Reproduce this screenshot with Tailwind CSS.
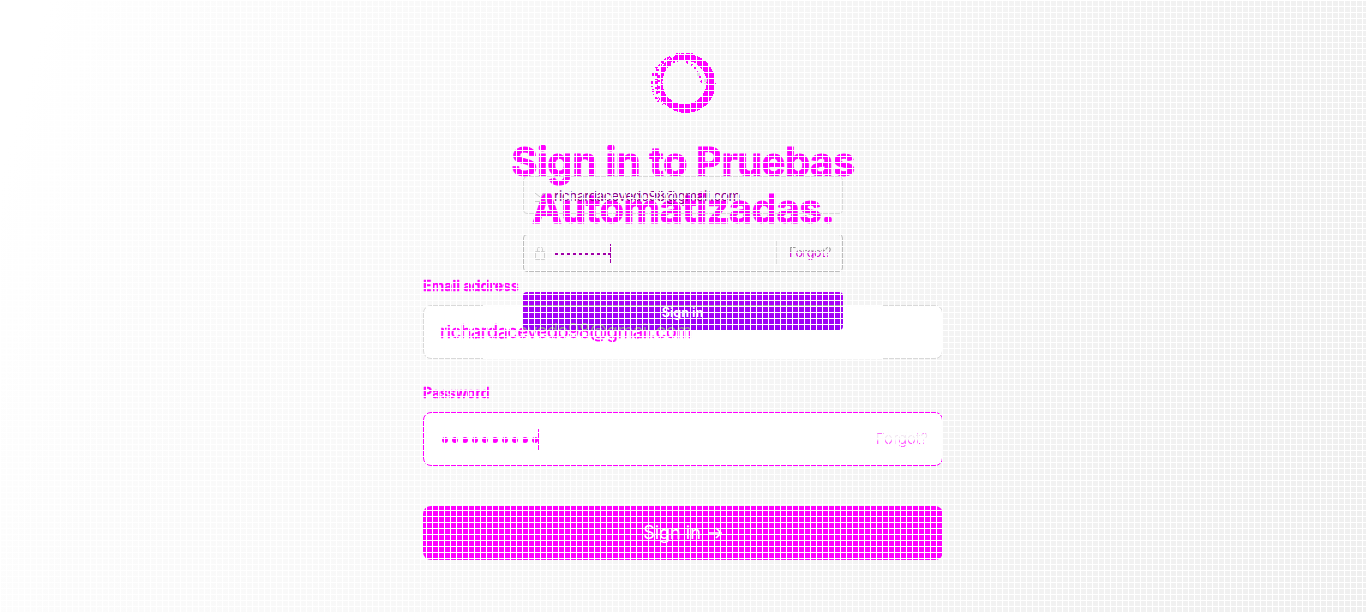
<!DOCTYPE html>
<html lang="en"><head><meta charset="utf-8"><title>Sign in</title>
<script src="https://cdn.jsdelivr.net/npm/@tailwindcss/browser@4"></script></head>
<body class="relative h-[612px] w-[1366px] overflow-hidden bg-[linear-gradient(105deg,#ffffff_3%,#fbfbfb_15%,#f8f8f8_35%,#f4f4f4_62%,#efefef_100%)] font-['Inter',sans-serif] text-[#ff00ff]">
<main class="mx-auto flex w-[520px] flex-col pt-[52px]">
  <svg class="ml-[227px] h-[62px] w-[68px]" viewBox="650 52 68 62" fill="none" stroke="#ff00ff" shape-rendering="crispEdges">
    <path fill="#ff00ff" stroke="none" fill-rule="evenodd" d="M686 54a29.500 29.500 0 1 0 .1 0ZM684.500 60.500a22 22 0 1 1-.1 0Z" />
    <path d="M678 54Q652 62 652 82Q652 94 659 102" stroke-width="2" stroke-dasharray="3 2 1 2"/>
    <path d="M668 58Q655 67 656 82Q656 94 664 104" stroke-width="3" stroke-dasharray="4 2 2 1"/>
    <path d="M676 54Q686 52 693 54" stroke-width="1" stroke-dasharray="4 1"/>
    <path d="M659 67V98" stroke="#fafafa" stroke-width="2" stroke-dasharray="2 2 4 3"/>
    <path d="M671 64Q690 57 705 80" stroke="#fafafa" stroke-width="3" stroke-dasharray="2 2"/>
    <path d="M686 62Q698 66 702 84" stroke-dasharray="2 3" stroke-width="2"/>
    <path d="M696 74h4M705 78v7" stroke="#dddddd" stroke-width="3" stroke-dasharray="4 1"/>
  </svg>
  <h1 class="mt-[24px] h-[96px] text-center text-[40px] leading-[47px] font-bold tracking-[-0.5px] [-webkit-text-stroke:0.8px_#ff00ff]">Sign in to Pruebas<br>Automatizadas.</h1>
  <label class="mt-[41px] flex h-5 items-center text-[14px] font-semibold tracking-[0.1px] [-webkit-text-stroke:0.4px_#ff00ff]"><span>Email address</span></label>
  <div class="relative mt-[10px] flex h-[54px] items-center rounded-lg border border-[#d9d9d9] bg-white px-4 pb-[2px] text-[18px] tracking-[-0.32px]">
    <span class="[-webkit-text-stroke:0.3px_#ff00ff]">richardacevedo98@gmail.com</span>
    <span class="absolute -top-px left-[59px] h-px w-[400px] bg-white"></span><span class="absolute -bottom-px left-[59px] h-px w-[400px] bg-white"></span>
  </div>
  <label class="mt-[23px] flex h-5 items-center text-[14px] font-semibold [-webkit-text-stroke:0.4px_#ff00ff]"><span>Password</span></label>
  <div class="mt-[10px] flex h-[54px] items-center justify-between rounded-lg border border-[#ff00ff] bg-white pr-[14px] pl-[18px] text-[15px]">
    <span class="flex items-center gap-[4px]"><i class="mt-px size-[6px] rounded-full bg-[#ff00ff]"></i><i class="mt-px size-[6px] rounded-full bg-[#ff00ff]"></i><i class="mt-px size-[6px] rounded-full bg-[#ff00ff]"></i><i class="mt-px size-[6px] rounded-full bg-[#ff00ff]"></i><i class="mt-px size-[6px] rounded-full bg-[#ff00ff]"></i><i class="mt-px size-[6px] rounded-full bg-[#ff00ff]"></i><i class="mt-px size-[6px] rounded-full bg-[#ff00ff]"></i><i class="mt-px size-[6px] rounded-full bg-[#ff00ff]"></i><i class="mt-px size-[6px] rounded-full bg-[#ff00ff]"></i><i class="mt-px size-[6px] rounded-full bg-[#ff00ff]"></i><i class="-ml-[4px] h-[21px] w-px bg-[#ff00ff]"></i></span>
    <span class="bg-[linear-gradient(#f0e4f0_0_3px,#ff00ff_3px_5px,#f0e4f0_6px_12px,#ff44ff_13px)] bg-clip-text font-light text-transparent">Forgot?</span>
  </div>
  <button class="mt-[40px] flex h-[54px] items-center justify-center gap-[7px] rounded-lg bg-[#ff00ff] pr-px pb-[2px] text-[18px] text-white">Sign in
    <svg class="mt-px h-3 w-[14px]" viewBox="0 0 14 12" fill="none" stroke="white" stroke-width="1.700"><path d="M0 6h13M8 1l5 5-5 5"/></svg></button>
</main>

<!-- compact form lying over the full-size one -->
<section class="absolute top-[176px] left-[523px] flex w-[320px] flex-col">
  <div class="flex h-[38px] items-center rounded border border-[#d9d9d9] pt-[3px] pr-3 pl-[10px] text-[13.500px] tracking-[-0.34px] text-[#8b008b]">
    <svg class="mr-[8px] h-[10px] w-3" viewBox="0 0 12 10" fill="none" stroke="#c8c8c8"><path d="M.5.5h11v9H.5zM1 1l5 4 5-4"/></svg><span>richardacevedo98@gmail.com</span>
  </div>
  <div class="mt-[20px] flex h-[38px] items-center rounded border border-[#bdbdbd] pr-[11px] pl-[11px] text-[12.500px]">
    <svg class="mr-[10px] h-[14px] w-[10px]" viewBox="0 0 10 14" fill="none" stroke="#cfcfcf"><path d="M.5 5.500h9v8h-9zM2.500 5V2.500Q2.500 1 5 1t2.500 1.500V5"/></svg>
    <span class="flex items-center gap-[3px]"><i class="mt-px size-[3px] bg-[#a000a8]"></i><i class="mt-px size-[3px] bg-[#a000a8]"></i><i class="mt-px size-[3px] bg-[#a000a8]"></i><i class="mt-px size-[3px] bg-[#a000a8]"></i><i class="mt-px size-[3px] bg-[#a000a8]"></i><i class="mt-px size-[3px] bg-[#a000a8]"></i><i class="mt-px size-[3px] bg-[#a000a8]"></i><i class="mt-px size-[3px] bg-[#a000a8]"></i><i class="mt-px size-[3px] bg-[#a000a8]"></i><i class="mt-px -ml-px size-[3px] bg-[#a000a8]"></i><i class="-ml-[4px] h-[19px] w-px bg-[#a000a8]"></i></span>
    <span class="ml-auto flex h-6 items-center border-l border-[#dddddd] pl-[12px]"><span class="bg-[linear-gradient(#999999_0_7px,#d000d0_8px)] bg-clip-text tracking-[-0.35px] text-transparent">Forgot?</span></span>
  </div>
  <button class="relative mt-[20px] flex h-[38px] items-center justify-center rounded bg-linear-to-b from-[#b000f8] to-[#9a00f5] pt-[4px] pr-px text-[12.500px] font-bold text-white"><i class="absolute top-[13px] left-0 h-px w-full bg-[#aaa0aa]"></i>Sign in</button>
</section>
<div class="absolute top-[318px] left-[523px] flex h-[12px] w-[178px] items-start overflow-hidden text-[18px] leading-[25px] tracking-[-0.32px] text-[#969096]" aria-hidden="true"><span class="-ml-[83px]">richardacevedo98@gmail.com</span></div>
<div class="pointer-events-none absolute inset-0 bg-[linear-gradient(to_right,white_1px,transparent_1px),linear-gradient(to_bottom,white_1px,transparent_1px)] bg-size-[6px_6px]"></div>
</body></html>
